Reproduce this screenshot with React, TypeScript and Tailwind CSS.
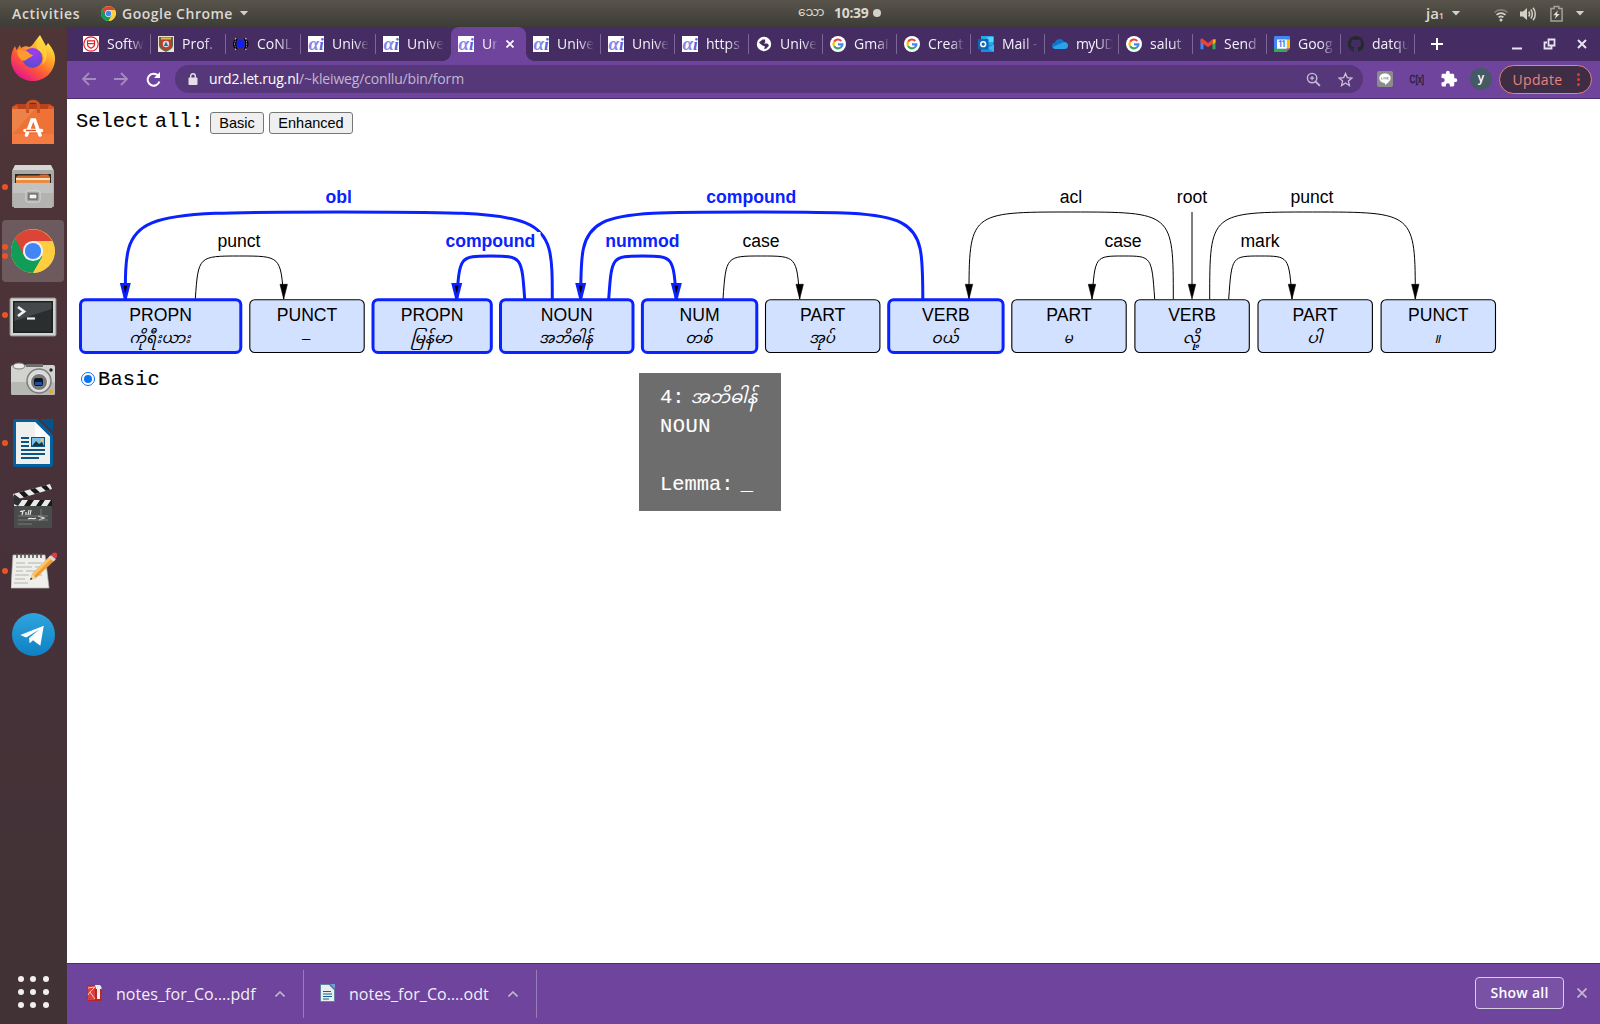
import React from "react";
import { clsx } from "clsx";

const UI = "font-['Open_Sans','Noto_Sans',sans-serif]";
const MONO = "font-['Liberation_Mono','Noto_Sans_Myanmar','Padauk',monospace]";

/* ---------- small brand marks ---------- */

function ChromeLogo({ className }: { className?: string }) {
  return (
    <svg viewBox="0 0 48 48" className={className}>
      <circle cx="24" cy="24" r="24" fill="#ffcd40" />
      <path d="M24 24 L4.500 10 A24 24 0 0 0 24 48 L34.400 30 Z" fill="#0f9d58" />
      <path d="M4.500 10 A24 24 0 0 1 44.800 13 L24 13 L13.600 28 Z" fill="#db4437" />
      <path d="M44.800 13 A24 24 0 0 1 24 48 L34.400 30 L34.500 13 Z" fill="#ffcd40" />
      <circle cx="24" cy="24" r="11" fill="#f1f1f1" />
      <circle cx="24" cy="24" r="8.800" fill="#4285f4" />
    </svg>
  );
}

function AlphaIcon() {
  return (
    <svg viewBox="0 0 16 16" className="size-4">
      <rect width="16" height="16" fill="#fff" />
      <g fontFamily="Liberation Serif" fontStyle="italic" fontWeight="700">
        <text x="0.400" y="14.200" fontSize="19" fill="#8588e8">α</text>
        <text x="11" y="13.600" fontSize="17" fill="#5d61dd">i</text>
      </g>
    </svg>
  );
}

function GoogleIcon() {
  return (
    <svg viewBox="0 0 16 16" className="size-4">
      <circle cx="8" cy="8" r="8" fill="#fff" />
      <g fill="none" strokeWidth="2.200">
        <path d="M4.200 5.600A4.400 4.400 0 0 1 11.200 4.900" stroke="#ea4335" />
        <path d="M4.200 5.600A4.600 4.600 0 0 0 4.200 10.400" stroke="#fbbc05" />
        <path d="M4.200 10.300A4.400 4.400 0 0 0 10.900 11.300" stroke="#34a853" />
        <path d="M10.900 11.300C12 10.400 12.400 9.400 12.400 8.300H8" stroke="#4285f4" />
      </g>
    </svg>
  );
}

function ShieldIcon() {
  return (
    <svg viewBox="0 0 16 16" className="size-4">
      <rect width="16" height="16" fill="#fff" />
      <circle cx="8" cy="8" r="7.200" fill="#fff" stroke="#e0202c" strokeWidth="1.200" />
      <path d="M4.500 4.800h7v4c0 1.800-1.800 2.700-3.500 3.500c-1.700-.8-3.500-1.700-3.500-3.500zM4.500 7.700h7" fill="none" stroke="#e0202c" strokeWidth="1.200" />
    </svg>
  );
}

function CrestIcon() {
  return (
    <svg viewBox="0 0 16 16" className="size-4">
      <rect width="16" height="16" fill="#e9e4d2" />
      <path d="M1 1h14v8c0 4-4 5-7 7c-3-2-7-3-7-7z" fill="#5d6a3f" />
      <path d="M2.500 4h11v5c0 3-3 4-5.500 5C5.500 13 2.500 12 2.500 9z" fill="#c33b2e" />
      <rect x="3" y="1.500" width="10" height="2" fill="#d5b74c" />
      <circle cx="8" cy="8" r="3.200" fill="#d9dfe2" />
      <path d="M5.800 10L8 5.500L10.200 10z" fill="#2b6f8b" />
    </svg>
  );
}

function ConllIcon() {
  return (
    <svg viewBox="0 0 16 16" className="size-4">
      <circle cx="7.500" cy="8" r="3.900" fill="#0f1eff" />
      <g fill="none" stroke="#d7d3df" strokeWidth="2.200" strokeDasharray="1.400 1.200">
        <path d="M3.500 2.500C1.200 5 1.200 11 3.500 13.500M12 2.500C14.300 5 14.300 11 12 13.500" />
      </g>
      <g fill="none" stroke="#000" strokeWidth="1.300">
        <path d="M4.200 2.500C2.200 4.500 2.200 11.500 4.200 13.500M11.300 2.500C13.300 4.500 13.300 11.500 11.300 13.500" />
        <path d="M1.800 4C.3 6.500 .3 9.500 1.800 12M13.700 4C15.200 6.500 15.200 9.500 13.700 12" />
      </g>
    </svg>
  );
}

function GlobeIcon() {
  return (
    <svg viewBox="0 0 16 16" className="size-4">
      <circle cx="8" cy="8" r="7.200" fill="#fff" />
      <path d="M3 6.500L6.500 3.500H9L10 5.500L8 7.500H11.500L13 9.500L10.500 12.500L8 13L9 10.500L6.500 9.500L4.500 8z" fill="#452c66" />
      <path d="M9 3.500L11 4.500L12 7L9.500 6.500z" fill="#fff" />
      <path d="M2.800 8.500L5.500 9.500L6.500 12.800C4.500 12.300 3 10.800 2.800 8.500z" fill="#fff" />
    </svg>
  );
}

function OutlookIcon() {
  return (
    <svg viewBox="0 0 16 16" className="size-4">
      <rect x="3" y="0" width="12.500" height="15" fill="#28a8ea" />
      <rect x="9.500" y="1" width="6" height="5" fill="#50d9ff" />
      <path d="M4 9h12v7H3z" fill="#1490df" />
      <path d="M16 8.500V16L9 12z" fill="#36b5f0" />
      <rect y="3" width="10.500" height="10.500" rx=".7" fill="#0f64b5" />
      <circle cx="5.200" cy="8.200" r="2.400" fill="none" stroke="#fff" strokeWidth="1.500" />
    </svg>
  );
}

function CloudIcon() {
  return (
    <svg viewBox="0 0 16 16" className="size-4">
      <path d="M3.600 13C1.600 13 0 11.500 0 9.700C0 8 1.300 6.700 3 6.500C3.700 4.500 5.500 3 7.700 3C9.800 3 11.300 4.200 12 6C14.300 6 16 7.500 16 9.500C16 11.500 14.500 13 12.600 13z" fill="#1173c9" />
      <path d="M3.600 13C2 13 1 12 .6 11L10 6.700L12 6C14.300 6 16 7.500 16 9.500C16 11.500 14.500 13 12.600 13z" fill="#28a3e8" />
    </svg>
  );
}

function GmailIcon() {
  return (
    <svg viewBox="0 0 16 16" className="size-4">
      <path d="M.5 4v9.300h3V7.500z" fill="#4285f4" />
      <path d="M15.500 4v9.300h-3V7.500z" fill="#34a853" />
      <path d="M12.500 3.800L15.500 3v3.200l-3 2.200z" fill="#fbbc04" />
      <path d="M.5 3.500C.7 2.500 2 2.300 3 3.100L8 6.900L13 3.100V7.600L8 11.300L.5 5.800z" fill="#ea4335" />
    </svg>
  );
}

function CalendarIcon() {
  return (
    <svg viewBox="0 0 16 16" className="size-4">
      <rect width="16" height="16" rx="1.200" fill="#4285f4" />
      <rect y="12.500" width="12.500" height="3.500" fill="#34a853" />
      <rect x="12.500" y="3.500" width="3.500" height="9" fill="#fbbc04" />
      <path d="M12.500 12.500H16L12.500 16z" fill="#ea4335" />
      <path d="M16 12.600V16h-3.400z" fill="#452c66" />
      <rect x="3" y="3.500" width="9.800" height="9.200" fill="#fff" />
      <text x="8" y="11.200" textAnchor="middle" fontSize="8.500" textLength="8" fontWeight="600" fontFamily="Roboto" fill="#2f74e8">11</text>
    </svg>
  );
}

function GithubIcon() {
  return (
    <svg viewBox="0 0 16 16" className="size-4">
      <path fill="#24292e" d="M8 0C3.580 0 0 3.580 0 8c0 3.540 2.290 6.530 5.470 7.590.4.070.55-.17.55-.38 0-.19-.01-.82-.01-1.490-2.010.37-2.530-.49-2.690-.94-.09-.23-.48-.94-.82-1.130-.28-.15-.68-.52-.01-.53.63-.01 1.080.58 1.230.82.72 1.210 1.870.87 2.330.66.07-.52.28-.87.51-1.070-1.780-.2-3.640-.89-3.640-3.950 0-.87.31-1.590.82-2.150-.08-.2-.36-1.020.08-2.120 0 0 .67-.21 2.200.82.64-.18 1.320-.27 2-.27s1.360.09 2 .27c1.530-1.040 2.200-.82 2.200-.82.44 1.100.16 1.920.08 2.120.51.56.82 1.270.82 2.150 0 3.070-1.870 3.750-3.650 3.950.29.25.54.73.54 1.480 0 1.070-.01 1.930-.01 2.200 0 .21.15.46.55.38A8.010 8.010 0 0 0 16 8c0-4.420-3.580-8-8-8z" />
    </svg>
  );
}

/* ---------- GNOME top bar ---------- */

function Caret({ className }: { className?: string }) {
  return (
    <svg viewBox="0 0 10 6" className={clsx("h-[5px] w-[10px]", className)}>
      <path d="M0 0H10L5 5.500z" fill="#d3d0c8" />
    </svg>
  );
}

function TopBar() {
  return (
    <header className={clsx("relative flex h-[27px] items-center bg-linear-to-b from-[#58544b] to-[#3d3c37] text-[14px] font-semibold text-[#dcd8d0]", UI)}>
      <span className="ml-[12px] w-[89px] tracking-[0.7px]">Activities</span>
      <ChromeLogo className="size-[15px]" />
      <span className="ml-[6px] tracking-[0.5px]">Google Chrome</span>
      <Caret className="ml-[6px]" />
      <div className="absolute top-0 left-[798px] flex h-[25px] items-center">
        <span className="w-[36px] text-[12px] font-normal font-['Noto_Sans_Myanmar','Padauk','Open_Sans',sans-serif]">သော</span>
        <span className="w-[38px] text-[14px] font-bold tracking-[-0.300px]">10:39</span>
        <span className="mt-[1px] ml-[1px] size-2 rounded-full bg-[#d3d0c8]" />
      </div>
      <div className="ml-auto flex items-center pr-[15px]">
        <span className="flex text-[15px]">
          ja<span className="mt-[6px] text-[9px] leading-[16px]">1</span>
        </span>
        <Caret className="ml-[7px]" />
        <svg viewBox="0 0 16 16" className="ml-[32px] size-4" fill="none" stroke="#d3d0c8" strokeWidth="1.700">
          <path d="M1.500 6.500A9.500 9.500 0 0 1 14.500 6.500" stroke="#85827a" />
          <path d="M3.500 9A6.500 6.500 0 0 1 12.500 9M5.600 11.400A3.600 3.600 0 0 1 10.400 11.400" />
          <circle cx="8" cy="14" r="1.500" fill="#d3d0c8" stroke="none" />
        </svg>
        <svg viewBox="0 0 16 16" className="ml-[11px] size-4" fill="none" stroke="#d3d0c8" strokeWidth="1.500">
          <path d="M0 5.500h3L7 2v12l-4-3.500H0z" fill="#d3d0c8" stroke="none" />
          <path d="M8.700 5.500C9.800 7 9.800 9 8.700 10.500M10.800 3.500C12.800 6 12.800 10 10.800 12.500M13 1.800C16 5 16 11 13 14.200" />
        </svg>
        <svg viewBox="0 0 14 18" className="ml-[14px] h-[17px] w-[13px]">
          <path d="M4.500 1.500h5v2H13v13.500H1V3.500h3.500z" fill="none" stroke="#a5a299" strokeWidth="1.600" />
          <path d="M8.500 5.500L3.500 11h3L5 15l5.500-5.500h-3z" fill="#e3e0d8" />
        </svg>
        <Caret className="ml-[12px]" />
      </div>
    </header>
  );
}

/* ---------- dock ---------- */

function Firefox() {
  return (
    <svg viewBox="0 0 46 48" className="mb-[3px] h-[48px] w-[46px]">
      <defs>
        <linearGradient id="ffBody" x1=".85" y1=".1" x2=".25" y2=".95">
          <stop offset="0" stopColor="#fff04a" />
          <stop offset=".35" stopColor="#ffa32a" />
          <stop offset=".65" stopColor="#ff5a35" />
          <stop offset="1" stopColor="#e8178a" />
        </linearGradient>
        <radialGradient id="ffCore" cx=".6" cy=".2" r=".8">
          <stop offset="0" stopColor="#a03cf0" />
          <stop offset="1" stopColor="#5a4bd0" />
        </radialGradient>
      </defs>
      <path d="M5 12L6.500 16L10 11L11 14C14 12 17 12 19 13C23 12 24 8 30 1C32 5 34 8 36 12L38 9C43 15 45.500 20 45 26C44 39 34 47 23 47C10 47 1 37 1 25C1 20 3 15 5 12z" fill="url(#ffBody)" />
      <circle cx="22.500" cy="24" r="10" fill="url(#ffCore)" />
      <path d="M7 17C9 15 12 15.500 14 17C17 16.500 19 18 20 20L23 21C22 23 18 24 16 26C12 28 8 25 7 17z" fill="#ff9a2e" />
      <path d="M30 3C27 9 25 13 28 16C34 19 35 25 32 31C37 27 38 20 35 14z" fill="#ffd43a" opacity=".8" />
    </svg>
  );
}

function SoftwareBag() {
  return (
    <svg viewBox="0 0 44 46" className="mb-[2px] h-[46px] w-[44px]">
      <path d="M1 8L5 5H39L43 8V14H1z" fill="#b8431a" />
      <path d="M1 8L6 6L8 12H1zM43 8L38 6L36 12H43z" fill="#d7592a" />
      <rect x="1" y="10" width="42" height="35" fill="#ee7136" />
      <path d="M1 10H24L1 36z" fill="#e9945a" opacity=".5" />
      <rect x="1" y="35" width="42" height="10" fill="#f57b42" />
      <path d="M16.500 14V6C16.500 1 27.500 1 27.500 6V14" fill="none" stroke="#cb5325" strokeWidth="3" />
      <path d="M15.500 36L21 21H23.500L29 36M14 31.500H30.500" fill="none" stroke="#fff" strokeWidth="3.600" strokeLinecap="round" />
      <path d="M15 31.500h10" stroke="#d9602d" strokeWidth="1.500" />
    </svg>
  );
}

function FilesCabinet() {
  return (
    <svg viewBox="0 0 44 46" className="mb-[2px] h-[46px] w-[44px]">
      <path d="M4 2H40L43 8H1z" fill="#d6d6d4" />
      <rect x="1" y="7" width="42" height="37" rx="1" fill="#a9a9a7" />
      <rect x="4" y="11" width="36" height="10" fill="#2c2723" />
      <path d="M5 14L7 12.500H28L30 11.500H37L39 14V22H5z" fill="#d9682c" />
      <rect x="5" y="15" width="34" height="2" fill="#f6e3b5" />
      <rect x="5" y="17" width="34" height="4" fill="#e98b43" />
      <path d="M2 20H42L43 24L41 45H3L1 24z" fill="#b3b3b1" />
      <path d="M2 20H42V30H2z" fill="#c9c9c7" opacity=".7" />
      <rect x="15" y="28" width="14" height="11" rx="2" fill="#a2a2a0" stroke="#dadad8" />
      <rect x="18" y="31" width="8" height="5" fill="#f4f4f4" stroke="#4c4c4c" />
    </svg>
  );
}

function Terminal() {
  return (
    <svg viewBox="0 0 48 40" className="mt-[3px] h-[40px] w-[48px]">
      <rect x="1" y="1" width="46" height="38" rx="1.500" fill="#d2d3d1" stroke="#8b8b89" />
      <rect x="4" y="4" width="40" height="32" fill="#1d2021" />
      <rect x="5.500" y="5.500" width="37" height="29" fill="#2b2e2f" />
      <path d="M5.500 5.500H42.500V12L5.500 24z" fill="#44484a" />
      <path d="M9 10L15 14.500L9 19" fill="none" stroke="#f0f0f0" strokeWidth="2.700" />
      <path d="M18 21.500H26" stroke="#f0f0f0" strokeWidth="2.200" />
    </svg>
  );
}

function Camera() {
  return (
    <svg viewBox="0 0 46 34" className="mb-px h-[34px] w-[46px]">
      <rect x="1" y="3" width="44" height="30" rx="2" fill="#d2d2cf" />
      <rect x="1" y="20" width="44" height="13" rx="2" fill="#b7b7b3" />
      <ellipse cx="9" cy="4" rx="6" ry="3" fill="#ececea" stroke="#777" />
      <rect x="16" y="2" width="17" height="3" fill="#6e6e6c" />
      <circle cx="29" cy="19" r="12" fill="#d9d9d7" stroke="#7c7c7a" strokeWidth="1.500" />
      <circle cx="29" cy="20" r="8.500" fill="#77797b" stroke="#efefef" />
      <rect x="24" y="16" width="9" height="8" rx="2" fill="#10141c" />
      <rect x="25" y="20" width="7" height="3" fill="#1b4fae" />
      <circle cx="41" cy="8" r="1.700" fill="#222" />
      <rect x="39" y="28" width="3.500" height="3" fill="#eea52c" />
    </svg>
  );
}

function WriterDoc() {
  return (
    <svg viewBox="0 0 40 48" className="h-[48px] w-[40px]">
      <path d="M0 2Q0 0 2 0H24L40 16V46Q40 48 38 48H2Q0 48 0 46z" fill="#04609c" />
      <path d="M27 0H40V13z" fill="#04538a" />
      <path d="M3 3H22L37 18V45H3z" fill="#efefee" />
      <path d="M22 3L37 18H22z" fill="#fdfdfd" />
      <g stroke="#0b5583" strokeWidth="2">
        <path d="M8 19h8M8 23h8M8 27h8M8 31h24M8 35h24M8 39h18" />
      </g>
      <rect x="18.500" y="18.500" width="13" height="9" fill="#7fc0e8" stroke="#0b5583" />
      <path d="M19 27L23 22L26 25L29 23L31 27z" fill="#24323a" />
      <circle cx="29" cy="21" r="1.500" fill="#f0c93c" />
    </svg>
  );
}

function Clapper() {
  return (
    <svg viewBox="0 0 42 48" className="h-[48px] w-[42px]">
      <path d="M1 11L38 1L40 6L3 17z" fill="#e9e9e7" />
      <path d="M7 9.500L12 14.500L17 13L12 8zM18 6.500L23 11L28 9.500L23 5zM29 3.500L34 8L38 6.500L34 2z" fill="#181818" />
      <rect x="2" y="17" width="38" height="6" fill="#e9e9e7" />
      <path d="M12 23L16 17H22L18 23zM24 23L28 17H33L29 23zM35 23L39 17H40V23z" fill="#181818" />
      <rect x="2" y="23" width="38" height="22" fill="#4a4c4c" />
      <path d="M2 11L10 17L6 23L2 21z" fill="#2c2f33" />
      <g stroke="#e8e8e8" strokeWidth="1.200" fill="none">
        <path d="M8 28.500l5-1M11 28l-1 4M14 29v3M17 27l-1 5M19 27l-1 5M16 36c3-2 5 1 8-1M26 33l6 2l-5 2" />
      </g>
      <path d="M6 33h30M6 37h30M6 41h14M29 26v12" stroke="#858585" strokeWidth=".8" />
    </svg>
  );
}

function Notepad() {
  return (
    <svg viewBox="0 0 46 40" className="mb-[2px] ml-[2px] h-[40px] w-[46px]">
      <path d="M2 5H34L38 38H0z" fill="#eeeeea" stroke="#bdbdb8" strokeWidth=".7" />
      <g stroke="#aaa" strokeWidth=".9">
        <path d="M5 13h9M17 13h14M5 17h16M24 17h8M5 21h7M15 21h14M4 25h14M21 25h10M4 29h10M3 33h14" />
      </g>
      <g stroke="#4c4c4c" strokeWidth="1.500" fill="none">
        <path d="M6 3v5M10 3v5M14 3v5M18 3v5M22 3v5M26 3v5M30 3v5" />
      </g>
      <path d="M19 30L21 24L39 6L44 10L25 28z" fill="#f39c2a" />
      <path d="M21 24L39 6L41 8L23 26z" fill="#fbc46b" />
      <path d="M19 30L21 24L25 28z" fill="#ecd9b4" />
      <path d="M19 30L20 27.500L21.500 29z" fill="#222" />
      <path d="M37.500 7.500L40 5L45 9L42.500 11.500z" fill="#d6d6d6" />
      <path d="M40 5Q43 1 46 3.500Q47 6 44.500 9z" fill="#dd3c43" />
    </svg>
  );
}

function Telegram() {
  return (
    <svg viewBox="0 0 44 44" className="mb-[2px] size-[43px]">
      <defs>
        <linearGradient id="tg" x1="0" y1="0" x2="0" y2="1">
          <stop offset="0" stopColor="#2fa5df" />
          <stop offset="1" stopColor="#0f80c2" />
        </linearGradient>
      </defs>
      <circle cx="22" cy="22" r="22" fill="url(#tg)" />
      <path d="M8.500 22.500L32.500 13L29 33.500L21.500 27.800L18 31L17.500 25.500L28 17L14.500 25z" fill="#fff" />
    </svg>
  );
}

const dock: { icon: React.ReactNode; dots: number; active?: boolean }[] = [
  { icon: <Firefox />, dots: 0 },
  { icon: <SoftwareBag />, dots: 0 },
  { icon: <FilesCabinet />, dots: 1 },
  { icon: <ChromeLogo className="size-[44px]" />, dots: 2, active: true },
  { icon: <Terminal />, dots: 1 },
  { icon: <Camera />, dots: 0 },
  { icon: <WriterDoc />, dots: 1 },
  { icon: <Clapper />, dots: 0 },
  { icon: <Notepad />, dots: 1 },
  { icon: <Telegram />, dots: 0 },
];

function Dock() {
  return (
    <nav className="flex w-[67px] shrink-0 flex-col bg-linear-to-b from-[#503536] via-[#47313a] to-[#413335]">
      {dock.map((d, i) => (
        <div key={i} className="flex h-16 items-center">
          <div className={clsx("relative ml-[2px] flex h-[62px] w-[62px] items-center justify-center rounded-[4px]", d.active && "bg-[#6d5a5e]")}>
            {d.icon}
            <div className="absolute top-0 left-0 flex h-full flex-col items-center justify-center gap-[3px]">
              {Array.from({ length: d.dots }, (_, k) => (
                <span key={k} className="h-[6px] w-[5.5px] rounded-full bg-[#e95420]" />
              ))}
            </div>
          </div>
        </div>
      ))}
      <div className="mt-auto mb-[16px] ml-[17.5px] grid grid-cols-3 gap-x-[6.500px] gap-y-[7px] self-start">
        {Array.from({ length: 9 }, (_, k) => (
          <span key={k} className="size-[6px] rounded-full bg-[#f2f0ee]" />
        ))}
      </div>
    </nav>
  );
}

/* ---------- browser chrome ---------- */

type Tab = { icon: React.ReactNode; title: string; w: string; sep?: boolean; active?: boolean };

const tabs: Tab[] = [
  { icon: <ShieldIcon />, title: "Softw", w: "w-[75px]", sep: true },
  { icon: <CrestIcon />, title: "Prof.", w: "w-[75px]", sep: true },
  { icon: <ConllIcon />, title: "CoNL", w: "w-[75px]", sep: true },
  { icon: <AlphaIcon />, title: "Unive", w: "w-[75px]", sep: true },
  { icon: <AlphaIcon />, title: "Unive", w: "w-[75px]" },
  { icon: <AlphaIcon />, title: "Ur", w: "w-[75px]", active: true },
  { icon: <AlphaIcon />, title: "Unive", w: "w-[75px]", sep: true },
  { icon: <AlphaIcon />, title: "Unive", w: "w-[74px]", sep: true },
  { icon: <AlphaIcon />, title: "https", w: "w-[74px]", sep: true },
  { icon: <GlobeIcon />, title: "Unive", w: "w-[74px]", sep: true },
  { icon: <GoogleIcon />, title: "Gmai", w: "w-[74px]", sep: true },
  { icon: <GoogleIcon />, title: "Creat", w: "w-[74px]", sep: true },
  { icon: <OutlookIcon />, title: "Mail -", w: "w-[74px]", sep: true },
  { icon: <CloudIcon />, title: "myUD", w: "w-[74px]", sep: true },
  { icon: <GoogleIcon />, title: "salut", w: "w-[74px]", sep: true },
  { icon: <GmailIcon />, title: "Send", w: "w-[74px]", sep: true },
  { icon: <CalendarIcon />, title: "Goog", w: "w-[74px]", sep: true },
  { icon: <GithubIcon />, title: "datqu", w: "w-[74px]", sep: true },
];

function TabStrip() {
  return (
    <div className={clsx("flex h-[34px] bg-[#452c63] pl-[9px]", UI)}>
      {tabs.map((t, i) => (
        <div
          key={i}
          className={clsx(
            "relative flex shrink-0 items-center pl-[7px]",
            t.w,
            t.active &&
              "rounded-t-lg bg-[#6e449c] before:absolute before:bottom-0 before:-left-2 before:size-2 before:bg-[radial-gradient(circle_at_0_0,#452c63_7.5px,#6e449c_8px)] after:absolute after:-right-2 after:bottom-0 after:size-2 after:bg-[radial-gradient(circle_at_100%_0,#452c63_7.5px,#6e449c_8px)]"
          )}
        >
          {t.icon}
          <span
            className={clsx(
              "ml-2 overflow-hidden text-[14px] leading-5 whitespace-nowrap text-[#f5f1fa]",
              t.active
                ? "w-4 [mask-image:linear-gradient(to_right,#000_50%,transparent)]"
                : "w-[37px] [mask-image:linear-gradient(to_right,#000_60%,transparent)]",
              t.title === "myUD" && "tracking-[-0.6px]"
            )}
          >
            {t.title}
          </span>
          {t.active && (
            <svg viewBox="0 0 8 8" className="ml-[8px] size-2" stroke="#fff" strokeWidth="1.700">
              <path d="M.5 .5L7.500 7.500M7.500 .5L.5 7.500" />
            </svg>
          )}
          {t.sep && <span className="absolute top-[7px] right-0 h-5 w-px bg-[#7d6797]" />}
        </div>
      ))}
      <div className="flex flex-1 items-center pl-[16px]">
        <svg viewBox="0 0 12 12" className="size-3" stroke="#fff" strokeWidth="2">
          <path d="M6 0V12M0 6H12" />
        </svg>
        <svg viewBox="0 0 80 14" className="ml-[65px] h-[14px] w-[80px]" stroke="#e9e4f0" strokeWidth="2" fill="none">
          <path d="M4 11.500H14" />
          <path d="M40.500 2.500H46.500V8.500H40.500zM39 5.500H36.500V11.500H43.500V9.500" strokeWidth="1.800" />
          <path d="M70 3L78 11M78 3L70 11" />
        </svg>
      </div>
    </div>
  );
}

function Toolbar() {
  return (
    <div className={clsx("flex h-[38px] items-center border-b border-[#4c2f70] bg-[#6e449c]", UI)}>
      <svg viewBox="0 0 80 16" className="mt-[-2px] ml-[15px] h-4 w-[80px]" fill="none" strokeWidth="1.800">
        <path d="M14 8H1M7 2L1 8L7 14M32 8H45M39 2L45 8L39 14" stroke="#a48cc0" />
        <path d="M76 4.500A6 6 0 1 0 77.400 10.500" stroke="#fff" strokeWidth="2" />
        <path d="M78 1V7H72z" fill="#fff" />
      </svg>
      <div className="mt-[-1px] ml-[13px] flex h-7 w-[1188px] items-center rounded-full bg-[#56387a] pr-[10px] pl-[12px]">
        <svg viewBox="0 0 10 12" className="mb-px ml-[1px] h-[12px] w-[10px]">
          <rect x=".5" y="4.500" width="9" height="7.500" rx="1" fill="#e4dfe9" />
          <path d="M2.700 5V3C2.700 0 7.300 0 7.300 3V5" fill="none" stroke="#e4dfe9" strokeWidth="1.400" />
        </svg>
        <span className="mb-px ml-[11px] text-[14px] tracking-[-0.160px] whitespace-nowrap text-[#c3b6d1]">
          <span className="text-white">urd2.let.rug.nl</span>/~kleiweg/conllu/bin/form
        </span>
        <svg viewBox="0 0 16 16" className="ml-auto size-[15px]" fill="none" stroke="#c9bdd6" strokeWidth="1.500">
          <circle cx="6.500" cy="6.500" r="5" />
          <path d="M10.300 10.300L14.800 14.800" strokeWidth="2" />
          <path d="M6.500 4.300V8.700M4.300 6.500H8.700" strokeWidth="1.200" />
        </svg>
        <svg viewBox="0 0 16 16" className="ml-[17px] size-[15px]" fill="none" stroke="#c9bdd6" strokeWidth="1.400">
          <path d="M8 1.500L9.900 6L14.800 6.400L11.100 9.600L12.200 14.400L8 11.800L3.800 14.400L4.900 9.600L1.200 6.400L6.100 6z" />
        </svg>
      </div>
      <svg viewBox="0 0 16 16" className="mb-px ml-[14px] size-4">
        <rect width="16" height="16" rx="2" fill="#8c8c8c" />
        <path d="M8 2.500C11.300 2.500 13.700 4.500 13.700 7.200C13.700 9.700 11 11.800 8 14C8.300 12.800 8 12 7.300 11.900C4.500 11.600 2.300 9.700 2.300 7.200C2.300 4.500 4.700 2.500 8 2.500z" fill="#fff" />
        <path d="M4.500 8.300V6.200M4.500 8.200H5.800M6.800 8.300V6.200M7.900 8.300V6.200L9.300 8.300V6.200M10.400 6.200V8.200H11.700M10.400 7.200H11.500M10.400 6.300H11.700" stroke="#8c8c8c" strokeWidth=".6" fill="none" />
      </svg>
      <svg viewBox="0 0 16 16" className="mb-px ml-[16px] h-4 w-4 overflow-visible">
        <text x="0.500" y="12" fontFamily="Liberation Sans" fontSize="11.500" textLength="14.500" lengthAdjust="spacingAndGlyphs" fill="#241b33" stroke="#241b33" strokeWidth="0.300">C[x]</text>
      </svg>
      <svg viewBox="0 0 24 24" className="mb-px ml-[15px] size-[18px]" fill="#fff">
        <path d="M20.500 11H19V7c0-1.100-.9-2-2-2h-4V3.500a2.500 2.500 0 0 0-5 0V5H4c-1.100 0-1.990.9-1.990 2v3.800H3.500c1.490 0 2.700 1.210 2.700 2.700s-1.210 2.700-2.700 2.700H2V20c0 1.100.9 2 2 2h3.800v-1.500c0-1.490 1.210-2.700 2.700-2.700s2.700 1.210 2.700 2.700V22H17c1.100 0 2-.9 2-2v-4h1.500a2.500 2.500 0 0 0 0-5z" />
      </svg>
      <span className="mb-px ml-[12px] flex size-[22px] items-center justify-center rounded-full bg-[#455a64] pb-[2px] text-[12px] font-semibold text-white">y</span>
      <button className="mb-px ml-[7px] flex h-[29px] w-[93px] items-center rounded-full border border-[#e8847c] bg-[#3f2d45] pl-[12px] text-[14px] text-[#e8847c]">
        <span className="w-[51px] tracking-[0.350px]">Update</span>
        <span className="ml-[14px] flex flex-col gap-[2px]">
          <i className="size-[3px] rounded-full bg-[#e53935]" />
          <i className="size-[3px] rounded-full bg-[#e53935]" />
          <i className="size-[3px] rounded-full bg-[#e53935]" />
        </span>
      </button>
    </div>
  );
}

/* ---------- dependency graph ---------- */

const BLUE = "#0a22ff";

const words = [
  { x: 80.5, w: 160.3, pos: "PROPN", form: "ကိုရီးယား", hot: true, fw: 61 },
  { x: 249.8, w: 114.4, pos: "PUNCT", form: "–" },
  { x: 373, w: 118.3, pos: "PROPN", form: "မြန်မာ", hot: true, fw: 41 },
  { x: 500.5, w: 132.5, pos: "NOUN", form: "အဘိဓါန်", hot: true, fw: 54 },
  { x: 642.4, w: 114.4, pos: "NUM", form: "တစ်", hot: true, fw: 27 },
  { x: 765.5, w: 114.4, pos: "PART", form: "အုပ်", fw: 26 },
  { x: 888.7, w: 114.4, pos: "VERB", form: "ဝယ်", hot: true, fw: 27 },
  { x: 1011.8, w: 114.4, pos: "PART", form: "မ", fw: 9 },
  { x: 1134.9, w: 114.4, pos: "VERB", form: "လို့", fw: 17 },
  { x: 1258, w: 114.4, pos: "PART", form: "ပါ", fw: 15 },
  { x: 1381.1, w: 114.4, pos: "PUNCT", form: "။", fw: 6 },
];

const arcs = [
  { from: 552.3, to: 125.3, level: 2, label: "obl", at: 338.7, hot: true },
  { from: 195.3, to: 283.7, level: 1, label: "punct", at: 239 },
  { from: 524.7, to: 456.7, level: 1, label: "compound", at: 490.4, hot: true },
  { from: 922.8, to: 580.7, level: 2, label: "compound", at: 751.3, hot: true },
  { from: 608.7, to: 676.3, level: 1, label: "nummod", at: 642.3, hot: true },
  { from: 723, to: 799.7, level: 1, label: "case", at: 761 },
  { from: 1173.3, to: 969, level: 2, label: "acl", at: 1071 },
  { from: 1154.7, to: 1092, level: 1, label: "case", at: 1123 },
  { from: 1209.7, to: 1415.3, level: 2, label: "punct", at: 1312 },
  { from: 1228.7, to: 1292, level: 1, label: "mark", at: 1260 },
];

function arcPath(a: number, b: number, level: number) {
  const top = level === 2 ? 212 : 256;
  const mid = (a + b) / 2;
  const d = (level === 1 ? 3 : 0) * Math.sign(b - a);
  return `M${a} 299C${a + d} ${top} ${a + d} ${top} ${mid} ${top}C${b - d} ${top} ${b - d} ${top} ${b} 299`;
}

function Graph() {
  return (
    <svg viewBox="67 150 1533 210" className="block h-[210px] w-[1533px]" fontFamily="Liberation Sans, Noto Sans Myanmar, Padauk, sans-serif" fontSize="17.600">
      {arcs.map((a, i) => (
        <g key={i}>
          <path d={arcPath(a.from, a.to, a.level)} fill="none" stroke={a.hot ? BLUE : "#000"} strokeWidth={a.hot ? 3 : 1} />
          <path d={`M${a.to - 3.7} 284.300H${a.to + 3.7}L${a.to} 299z`} fill="#000" stroke={a.hot ? BLUE : "#000"} strokeWidth={a.hot ? 2.8 : 0.6} />
        </g>
      ))}
      <path d="M1192 212V290" stroke="#000" />
      <path d="M1188.300 284.300H1195.700L1192 299z" stroke="#000" strokeWidth="0.600" />
      <text x="1192" y="202.700" textAnchor="middle">root</text>
      <rect x="443" y="232" width="97.500" height="18" fill="#fff" />
      {arcs.map((a, i) => (
        <text key={i} x={a.at} y={a.level === 2 ? 202.7 : 246.7} textAnchor="middle" fill={a.hot ? BLUE : "#000"} fontWeight={a.hot ? 700 : 400}>
          {a.label}
        </text>
      ))}
      {words.map((n, i) => (
        <g key={i} textAnchor="middle">
          <rect x={n.x} y="299.700" width={n.w} height="52.800" rx="5" fill="#d2e1ff" stroke={n.hot ? BLUE : "#000"} strokeWidth={n.hot ? 3 : 1.1} />
          <text x={n.x + n.w / 2} y="320.700">{n.pos}</text>
          <text x={n.x + n.w / 2 - 0.8} y="343" fontStyle="italic" fontSize="15" textLength={n.fw} lengthAdjust="spacingAndGlyphs">
            {n.form}
          </text>
        </g>
      ))}
    </svg>
  );
}

function Page() {
  return (
    <main className={clsx("relative flex-1 overflow-hidden bg-white text-[20.400px] text-black [-webkit-text-stroke:0.120px]", MONO)}>
      <div className="flex h-[51px] items-center pb-[3px] pl-[9px]">
        <span className="w-[134px] pb-px whitespace-nowrap [word-spacing:-7px]">Select all:</span>
        <button className="h-[22px] w-[54px] rounded-[3px] border border-[#767676] bg-[#efefef] text-[14.500px] leading-none font-['Liberation_Sans',sans-serif] [-webkit-text-stroke:0]">Basic</button>
        <button className="ml-[5px] h-[22px] w-[84px] rounded-[3px] border border-[#767676] bg-[#efefef] text-[14.500px] leading-none font-['Liberation_Sans',sans-serif] [-webkit-text-stroke:0]">Enhanced</button>
      </div>
      <div className="[-webkit-text-stroke:0]">
        <Graph />
      </div>
      <label className="flex h-[38px] items-center pl-[14px]">
        <span className="flex size-[14px] items-center justify-center rounded-full border border-[#0b73f0] bg-white">
          <span className="size-2 rounded-full bg-[#0b73f0]" />
        </span>
        <span className="mt-[2px] ml-[3px] tracking-[0.150px]">Basic</span>
      </label>
      <div className="absolute top-[274px] left-[572px] h-[138px] w-[142px] bg-[#6d6d6d] py-[10px] pl-[21px] text-[20.400px] leading-[29px] whitespace-pre text-white">
        <div className="flex h-[29px] items-center gap-[6px]">
          <span>4:</span>
          <i className="mt-[2px] text-[18px] [-webkit-text-stroke:0]">အဘိဓါန်</i>
        </div>
        <div className="tracking-[0.500px]">NOUN</div>
        <div>{" "}</div>
        <div className="[word-spacing:-5px]">Lemma: _</div>
      </div>
    </main>
  );
}

function Download({ icon, name }: { icon: React.ReactNode; name: string }) {
  return (
    <div className="flex items-center border-r border-[#9a7dba] pr-[18px]">
      {icon}
      <span className="ml-[14px] w-[142px] text-[16px] tracking-[0.060px] whitespace-nowrap">{name}</span>
      <svg viewBox="0 0 10 6" className="ml-[17px] h-[6px] w-[10px]" fill="none" stroke="#c2b5d0" strokeWidth="1.600">
        <path d="M.5 5.500L5 1L9.500 5.500" />
      </svg>
    </div>
  );
}

function DownloadShelf() {
  return (
    <footer className={clsx("flex h-[61px] shrink-0 border-t border-[#4c2f70] bg-[#6e449c] text-[#f3eff7]", UI)}>
      <div className="mt-[6px] mb-[6px] flex gap-4 pl-[20px]">
        <Download
          name="notes_for_Co….pdf"
          icon={
            <svg viewBox="0 0 15 18" className="mb-[2px] h-[18px] w-[15px]">
              <rect x=".5" y="1" width="14" height="16" fill="#b3262a" />
              <path d="M1 2H8V16H1z" fill="#d8413c" />
              <path d="M8 1h5l1.500 2v2H9zM10 5h3v10h-3z" fill="#eee" />
              <path d="M1 4L8 3L3 8L8 15M1 11L3 8" stroke="#f1c9c6" fill="none" />
            </svg>
          }
        />
        <Download
          name="notes_for_Co….odt"
          icon={
            <svg viewBox="0 0 15 18" className="mb-[3px] h-[18px] w-[15px]">
              <path d="M.5 .5H9L14.500 6V17.500H.5z" fill="#e9eef1" stroke="#4b7791" strokeWidth=".7" />
              <path d="M10 0H15V5z" fill="#6aa5cf" />
              <path d="M3 7.500h8M3 10h9M3 12.500h9M3 15h6" stroke="#155f8d" strokeWidth="1.200" />
            </svg>
          }
        />
      </div>
      <button className="mt-[13px] ml-auto h-8 w-[89px] rounded-[4px] border border-[#d8cee3] bg-[#7a52a5] pb-px text-[14px] leading-none font-semibold tracking-[0.250px] text-white">Show all</button>
      <svg viewBox="0 0 10 10" className="mt-[24px] mr-[13px] ml-[13px] size-[10px]" stroke="#c2b8cd" strokeWidth="1.800">
        <path d="M.5 .5L9.500 9.500M9.500 .5L.5 9.500" />
      </svg>
    </footer>
  );
}

export default function App() {
  return (
    <div className="flex h-[1024px] w-[1600px] flex-col overflow-hidden">
      <TopBar />
      <div className="flex min-h-0 flex-1">
        <Dock />
        <div className="flex min-w-0 flex-1 flex-col">
          <TabStrip />
          <Toolbar />
          <Page />
          <DownloadShelf />
        </div>
      </div>
    </div>
  );
}
